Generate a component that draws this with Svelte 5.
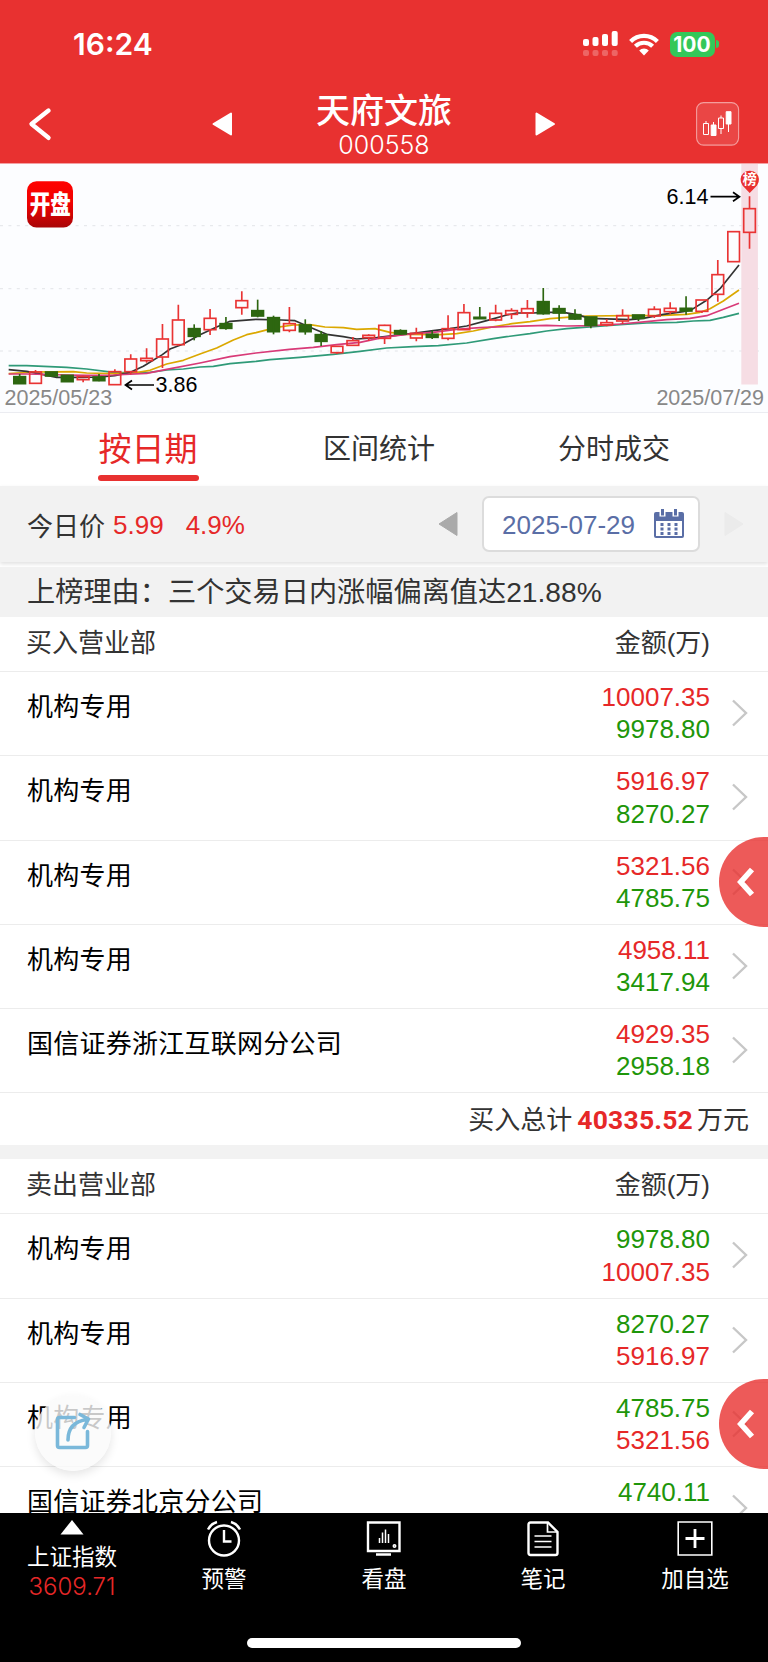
<script lang="ts">
  type Row = { name: string; first: string; second: string };

  const buyers: Row[] = [
    { name: "机构专用", first: "10007.35", second: "9978.80" },
    { name: "机构专用", first: "5916.97", second: "8270.27" },
    { name: "机构专用", first: "5321.56", second: "4785.75" },
    { name: "机构专用", first: "4958.11", second: "3417.94" },
    { name: "国信证券浙江互联网分公司", first: "4929.35", second: "2958.18" },
  ];

  const sellers: Row[] = [
    { name: "机构专用", first: "9978.80", second: "10007.35" },
    { name: "机构专用", first: "8270.27", second: "5916.97" },
    { name: "机构专用", first: "4785.75", second: "5321.56" },
    { name: "国信证券北京分公司", first: "4740.11", second: "" },
  ];

  const tabs = ["按日期", "区间统计", "分时成交"];
  let activeTab = $state(0);

  // [body top, body bottom, high, low, rising]
  const candles: [number, number, number, number, number][] = [
    [641, 662, 633, 662, 0],
    [627, 661, 621, 661, 1],
    [627, 639, 627, 639, 0],
    [637, 656, 637, 656, 0],
    [641, 650, 638, 658, 1],
    [642, 653, 633, 655, 0],
    [626, 665, 619, 665, 1],
    [588, 626, 574, 634, 1],
    [586, 593, 556, 599, 1],
    [528, 582, 483, 615, 1],
    [471, 545, 425, 548, 1],
    [497, 520, 484, 532, 0],
    [466, 500, 438, 516, 1],
    [482, 496, 462, 500, 0],
    [413, 434, 385, 455, 1],
    [443, 459, 410, 463, 0],
    [464, 506, 458, 514, 0],
    [482, 502, 432, 508, 1],
    [486, 506, 469, 515, 0],
    [515, 535, 504, 549, 0],
    [550, 569, 550, 573, 1],
    [533, 547, 522, 549, 1],
    [517, 524, 514, 534, 1],
    [487, 526, 485, 543, 1],
    [503, 513, 499, 516, 0],
    [511, 525, 494, 535, 1],
    [514, 523, 503, 528, 0],
    [497, 526, 457, 532, 1],
    [449, 500, 423, 500, 1],
    [463, 467, 432, 468, 0],
    [451, 471, 425, 475, 1],
    [443, 454, 436, 468, 1],
    [437, 450, 411, 464, 1],
    [416, 452, 375, 455, 0],
    [437, 450, 427, 474, 0],
    [455, 468, 439, 471, 0],
    [462, 487, 462, 496, 0],
    [479, 486, 468, 490, 1],
    [458, 474, 439, 483, 1],
    [456, 466, 456, 474, 0],
    [439, 459, 430, 465, 1],
    [436, 446, 418, 453, 1],
    [436, 444, 400, 455, 0],
    [411, 445, 411, 450, 1],
    [335, 394, 291, 416, 1],
    [206, 296, 206, 296, 1],
    [137, 208, 100, 257, 1],
  ];

  const averages = [
    {
      color: "#2f9a78",
      points:
        "26,608 80,608 200,613 260,618 340,628 400,629 450,628 500,621 550,618 600,612 640,610 690,602 768,595 810,590 900,583 1000,574 1080,565 1160,555 1240,551 1315,548 1400,540 1480,527 1520,521 1590,512 1640,504 1700,497 1780,491 1860,485 1940,480 2030,478 2080,474 2130,472 2170,463 2217,451",
    },
    {
      color: "#dba800",
      points:
        "26,632 100,627 220,626 260,630 340,632 400,630 450,622 500,603 550,592 600,573 650,555 700,531 740,515 768,509 830,493 880,486 930,485 975,492 1030,494 1070,499 1125,497 1170,508 1220,514 1320,515 1370,512 1420,504 1470,493 1536,482 1590,476 1650,467 1700,463 1760,459 1890,458 1990,457 2060,454 2100,448 2130,437 2170,414 2217,381",
    },
    {
      color: "#333",
      points:
        "26,620 80,625 130,635 170,643 250,643 300,642 344,638 391,628 430,610 487,575 510,558 550,543 600,515 650,492 690,475 768,469 845,471 885,473 930,493 980,514 1030,521 1070,528 1130,524 1180,518 1240,511 1300,503 1350,497 1400,489 1460,473 1520,456 1550,450 1600,450 1631,448 1690,448 1730,455 1770,466 1890,470 1930,466 1990,454 2050,446 2075,440 2120,412 2160,377 2217,306",
    },
    {
      color: "#d83a78",
      points:
        "26,633 80,633 200,636 260,637 340,636 440,631 500,619 600,600 690,581 768,570 868,559 940,553 1010,545 1080,538 1150,523 1230,513 1300,508 1380,498 1440,494 1536,490 1640,487 1700,489 1780,488 1860,483 1940,476 2000,470 2070,466 2120,458 2217,421",
    },
  ];

  const centerOf = (i: number) => 59 + i * 47.6;
</script>

{#snippet department(row: Row, selling: boolean)}
  <div class="row">
    <span class="name">{row.name}</span>
    <div class="amounts">
      <span class:up={!selling} class:down={selling}>{row.first}</span>
      <span class:up={selling} class:down={!selling}>{row.second}</span>
    </div>
    <svg class="more" viewBox="0 0 16 28"><path d="M1 1.5 14 14 1 26.5" /></svg>
  </div>
{/snippet}

{#snippet sideHandle()}
  <button class="side" aria-label="展开">
    <svg width="18" height="32" viewBox="0 0 18 32"><path d="M15 3.5 3.8 16 15 28.5" /></svg>
  </button>
{/snippet}

<div class="page">
  <header>
    <div class="status">
      <span class="time">16:24</span>
      <div class="status-icons">
        <svg width="36" height="26" viewBox="0 0 36 26" fill="#fff">
          <rect x="0" y="8" width="6" height="7" rx="2" />
          <rect x="9.5" y="6" width="6" height="9" rx="2" />
          <rect x="19" y="3" width="6" height="12" rx="2" />
          <rect x="28.7" y="0" width="6" height="15" rx="2" />
          <g opacity="0.25">
            <rect x="0" y="19" width="6" height="6" rx="2" />
            <rect x="9.5" y="19" width="6" height="6" rx="2" />
            <rect x="19" y="19" width="6" height="6" rx="2" />
            <rect x="28.7" y="19" width="6" height="6" rx="2" />
          </g>
        </svg>
        <svg class="wifi" width="30" height="23" viewBox="0 0 30 23">
          <path d="M1.6 8.4a19 19 0 0 1 26.8 0" />
          <path d="M6.4 13.3a12.2 12.2 0 0 1 17.2 0" />
          <path class="dot" d="M15 22.5 10.2 17.6a6.8 6.8 0 0 1 9.6 0z" />
        </svg>
        <span class="battery">100</span>
        <i class="nub"></i>
      </div>
    </div>
    <div class="nav">
      <svg width="26" height="36" viewBox="0 0 26 36">
        <path d="M20.5 4.5 3.5 18 20.5 31.8" fill="none" stroke="#fff" stroke-width="4.4" stroke-linecap="round" stroke-linejoin="round" />
      </svg>
      <svg width="22" height="26" viewBox="0 0 22 26">
        <path d="M1.5 13 19 2.5v21z" fill="#fff" stroke="#fff" stroke-width="2" stroke-linejoin="round" />
      </svg>
      <div class="title">
        <h1>天府文旅</h1>
        <span>000558</span>
      </div>
      <svg width="22" height="26" viewBox="0 0 22 26">
        <path d="M20 13 2.5 2.5v21z" fill="#fff" stroke="#fff" stroke-width="2" stroke-linejoin="round" />
      </svg>
      <span></span>
      <svg width="44" height="44" viewBox="0 0 44 44">
        <rect x="0.6" y="0.6" width="42" height="42.5" rx="7" fill="#fff" fill-opacity="0.1" stroke="#fff" stroke-opacity="0.5" stroke-width="1.1" />
        <g fill="none" stroke="#fff" stroke-width="1">
          <path d="M7.5 21.5h5v11h-5zM10 19v2.5M22.5 16h5v10.5h-5zM25 13.5V16M25 26.5V32M17.5 20v4M32.5 22v8" />
          <path d="M15.2 23h4.8v10.5h-4.8zM30.2 9.7h4.8v12.300h-4.8z" fill="#fff" />
        </g>
      </svg>
    </div>
  </header>

  <svg class="chart" viewBox="0 1 768 248">
    <defs>
      <linearGradient id="badge" x2="0" y2="1">
        <stop offset="0" stop-color="#ff0200" />
        <stop offset="0.5" stop-color="#ee0202" />
        <stop offset="1" stop-color="#a80507" />
      </linearGradient>
    </defs>
    <g stroke="#e2e4e8" stroke-width="1" stroke-dasharray="3 5.4">
      <path d="M0 62.7H764M0 125.7H764M0 188H764" />
    </g>
    <rect x="741.3" y="1" width="16.6" height="220.5" fill="#f6dde4" />
    <g transform="scale(0.33333)">
      {#each averages as line}
        <polyline points={line.points} stroke={line.color} stroke-width="5" fill="none" stroke-linejoin="round" />
      {/each}
      {#each candles as [top, bottom, high, low, rising], i}
        {@const cx = centerOf(i)}
        {#if rising}
          <g fill="none" stroke="#e93434" stroke-width="5">
            <rect x={cx - 17.5} y={top} width="35" height={bottom - top} />
            <path d="M{cx} {high}V{top}M{cx} {bottom}V{low}" />
          </g>
        {:else}
          <g fill="#2d6610" stroke="#2d6610" stroke-width="5">
            <rect x={cx - 17.5} y={top} width="35" height={bottom - top} />
            <path d="M{cx} {high}V{low}" />
          </g>
        {/if}
      {/each}
    </g>
    <rect x="27" y="18.3" width="46" height="46.3" rx="9.5" fill="url(#badge)" />
    <text transform="translate(50.3 51) scale(1 1.25)" class="badge-text" text-anchor="middle">开盘</text>
    <g fill="none" stroke="#000" stroke-width="1.7">
      <path d="M154 222H126M132 217.5 125.5 222 132 226.5" />
      <path d="M710.5 33.7H738.5M733 29.2 739.5 33.7 733 38.2" />
    </g>
    <text x="155.5" y="229" class="price">3.86</text>
    <text x="666.5" y="41" class="price">6.14</text>
    <path d="M742.5 22.5A9.2 9.2 0 1 1 757 22.5L749.7 30z" fill="#e93030" />
    <text x="749.7" y="21.3" class="pin" text-anchor="middle">榜</text>
    <text x="4.5" y="242" class="date">2025/05/23</text>
    <text x="764" y="242" class="date" text-anchor="end">2025/07/29</text>
  </svg>

  <div class="tabs">
    {#each tabs as tab, i}
      <button class:active={activeTab === i} onclick={() => (activeTab = i)}>
        <span>{tab}</span>
        <i></i>
      </button>
    {/each}
  </div>

  <div class="day-bar">
    <span>今日价</span>
    <span class="up quote">5.99</span>
    <span class="up figure">4.9%</span>
    <svg class="prev" width="20" height="26" viewBox="0 0 20 26"><path d="M1 13 19 1.5V24.5z" fill="#aaa" stroke="#aaa" stroke-linejoin="round" /></svg>
    <div class="picker">
      <span class="figure">2025-07-29</span>
      <svg width="32" height="30" viewBox="0 0 32 30">
        <path d="M3 3H29Q31 3 31 5V27Q31 29 29 29H3Q1 29 1 27V5Q1 3 3 3z" fill="#5a6ea6" />
        <path d="M3 12H29V27H3z" fill="#fff" />
        <path d="M9.5 0V7.5M22.5 0V7.5" stroke="#fff" stroke-width="6" />
        <path d="M9.5 0V6.5M22.5 0V6.5" stroke="#5a6ea6" stroke-width="3" />
        <path d="M7.5 15.5h17M7.5 20h17M7.5 24.5h17" stroke="#5a6ea6" stroke-width="3" stroke-dasharray="3 4" />
      </svg>
    </div>
    <svg class="next" width="20" height="26" viewBox="0 0 20 26"><path d="M19 13 1 1.5V24.5z" fill="#ebebeb" stroke="#ebebeb" stroke-linejoin="round" /></svg>
  </div>

  <div class="reason">上榜理由：三个交易日内涨幅偏离值达21.88%</div>

  <section>
    <div class="head"><span>买入营业部</span><span>金额(万)</span></div>
    {#each buyers as row}
      {@render department(row, false)}
    {/each}
    <div class="total">买入总计<b>40335.52</b>万元</div>
    {@render sideHandle()}
  </section>

  <section class="sell">
    <div class="head"><span>卖出营业部</span><span>金额(万)</span></div>
    {#each sellers as row}
      {@render department(row, true)}
    {/each}
    {@render sideHandle()}
  </section>

  <button class="share" aria-label="分享">
    <svg width="38" height="40" viewBox="0 0 38 40">
      <path d="M20.5 5.5H5.5Q3.5 5.5 3.5 7.5V33.5Q3.5 35.5 5.5 35.5H31.5Q33.5 35.5 33.5 33.5V19.5" />
      <path d="M14 28Q14 10 33 7.5M26 2.5 34.5 7 30 15.5" />
    </svg>
  </button>

  <footer>
    <div class="item index">
      <svg width="24" height="15" viewBox="0 0 24 15"><path d="M12 0 23.5 14.5H.5z" fill="#fff" /></svg>
      <span>上证指数</span>
      <em>3609.71</em>
    </div>
    <div class="item">
      <svg width="36" height="37" viewBox="0 0 36 37">
        <circle cx="18" cy="20.5" r="15" />
        <path d="M18 10V21.5H25.5M2 9.5Q4.5 4 11 2M34 9.5Q31.5 4 25 2" />
      </svg>
      <span>预警</span>
    </div>
    <div class="item">
      <svg width="36" height="37" viewBox="0 0 36 37">
        <path d="M2 2.5H33.5V31H2zM10 34.5H25" />
        <path d="M13.5 18V23M16.5 12.5V23M19.5 9.5V23M22.5 14V23" stroke-width="1.5" />
        <circle cx="28.5" cy="26" r="0.8" />
      </svg>
      <span>看盘</span>
    </div>
    <div class="item">
      <svg width="36" height="37" viewBox="0 0 36 37">
        <path d="M5.5 2.5H23L32.5 12V33Q32.5 35 30.5 35H5.5Q3.5 35 3.5 33V4.5Q3.5 2.5 5.5 2.5z" />
        <path d="M22.5 3V12H32M9.5 16H26.5M9.5 21.5H26.5M9.5 27H26.5" stroke-width="1.7" />
      </svg>
      <span>笔记</span>
    </div>
    <div class="item">
      <svg width="36" height="37" viewBox="0 0 36 37">
        <path d="M1.2 2H34.8V35H1.2z" stroke-width="1.6" />
        <path d="M8.5 18.5H27.5M18 9V28" stroke-width="2.8" />
      </svg>
      <span>加自选</span>
    </div>
    <div class="home"></div>
  </footer>
</div>

<style>
  :global(body) {
    margin: 0;
    background: #fff;
  }

  .page {
    position: relative;
    width: 768px;
    height: 1662px;
    overflow: hidden;
    background: #fff;
    color: #333;
    font-family: "Liberation Sans", "Noto Sans CJK SC", sans-serif;
    font-size: 26px;
    font-weight: 400;
  }

  button {
    padding: 0;
    border: none;
    background: none;
    color: inherit;
    font: inherit;
  }

  svg {
    display: block;
  }

  header {
    box-sizing: border-box;
    height: 164px;
    background: #e83130;
    border-bottom: 1px solid #f4a0a3;
    color: #fff;
  }

  .status {
    display: flex;
    align-items: center;
    justify-content: space-between;
    height: 88px;
    padding: 0 49px 0 73px;
    font-family: Inter, sans-serif;
  }

  .time {
    font-size: 30px;
    font-weight: 600;
  }

  .status-icons {
    display: flex;
    align-items: center;
  }

  .wifi {
    margin: 0 11px 0 10px;
    fill: none;
    stroke: #fff;
    stroke-width: 4.2;
  }

  .wifi .dot {
    fill: #fff;
    stroke: none;
  }

  .battery {
    width: 45px;
    height: 25px;
    border-radius: 7px;
    background: #34c759;
    font-size: 21px;
    font-weight: 700;
    line-height: 25px;
    text-align: center;
  }

  .nub {
    width: 3px;
    height: 8px;
    margin-left: 1.5px;
    border-radius: 0 4px 4px 0;
    background: #34c759;
  }

  .nav {
    display: grid;
    grid-template-columns: 184px 22px 1fr 22px 140px 44px;
    align-items: center;
    height: 72px;
    padding: 0 28px;
  }

  .title {
    padding-top: 4px;
    text-align: center;
  }

  h1 {
    margin: 0;
    font-size: 34px;
    font-weight: 500;
    line-height: 38px;
  }

  .title span {
    display: block;
    font-family: Inter, sans-serif;
    font-size: 25px;
    font-weight: 300;
    line-height: 30px;
  }

  .chart {
    width: 768px;
    height: 248px;
    background: #fcfdff;
    border-bottom: 1px solid #ebecf1;
  }

  .price {
    font-size: 21.5px;
  }

  .date {
    fill: #888;
    font-size: 21.5px;
  }

  .badge-text {
    fill: #fff;
    font-size: 20.5px;
    font-weight: 900;
  }

  .pin {
    fill: #fff;
    font-size: 14px;
    font-weight: 700;
  }

  .tabs {
    display: grid;
    grid-template-columns: 232px 230px 240px;
    justify-items: center;
    height: 73px;
    padding-left: 32px;
    font-size: 28px;
  }

  .tabs button {
    display: flex;
    flex-direction: column;
    height: 68px;
  }

  .tabs span {
    height: 62px;
    line-height: 73px;
  }

  .tabs i {
    flex: none;
    align-self: stretch;
    height: 5.5px;
    margin: 0 -1px;
    border-radius: 3px;
  }

  .tabs .active {
    color: #e62828;
    font-size: 33px;
  }

  .tabs .active i {
    background: #e83130;
  }

  .day-bar {
    display: flex;
    align-items: center;
    height: 76px;
    padding-left: 27px;
    background: #f2f2f2;
    box-shadow: 0 2px 4px rgba(0, 0, 0, 0.12);
  }

  .up {
    color: #e62828;
  }

  .down {
    color: #1e960a;
  }

  .day-bar .figure,
  .quote {
    padding-top: 3px;
  }

  .quote {
    margin: 0 22px 0 8px;
  }

  .prev {
    margin: 0 24px 0 auto;
  }

  .next {
    margin: 0 24px;
  }

  .picker {
    display: flex;
    align-items: center;
    box-sizing: border-box;
    width: 218px;
    height: 56px;
    padding: 0 13px 0 18px;
    justify-content: space-between;
    background: #fff;
    border: 2px solid #dcdcdc;
    border-radius: 7px;
    color: #5a6ea6;
  }

  .reason {
    height: 50px;
    margin-top: 5px;
    padding-left: 27px;
    background: #f2f2f2;
    font-size: 28.2px;
    line-height: 50px;
  }

  section {
    position: relative;
  }

  .head {
    display: flex;
    justify-content: space-between;
    height: 54px;
    padding: 0 58px 0 26px;
    line-height: 53px;
  }

  .row {
    display: flex;
    box-sizing: border-box;
    height: 84.3px;
    padding: 9px 20px 0 27px;
    border-top: 1px solid #ececec;
  }

  .name {
    flex: 1;
    color: #000;
    letter-spacing: 0.25px;
    line-height: 52px;
  }

  .amounts {
    display: flex;
    flex-direction: column;
    line-height: 32.3px;
    text-align: right;
  }

  .more {
    width: 16px;
    height: 28px;
    margin: 18px 0 0 22px;
    fill: none;
    stroke: #c7c7c7;
    stroke-width: 2.4;
  }

  .total {
    box-sizing: border-box;
    height: 53px;
    padding-right: 19px;
    border-top: 1px solid #ececec;
    line-height: 54px;
    text-align: right;
  }

  .total b {
    margin: 0 4px 0 5px;
    color: #e62828;
    font-family: Roboto, sans-serif;
    font-size: 26.5px;
    font-weight: 700;
    letter-spacing: 0.2px;
  }

  .sell {
    border-top: 14px solid #f2f2f2;
  }

  .side {
    position: absolute;
    top: 220px;
    right: 0;
    width: 49px;
    height: 90px;
    padding-left: 17.5px;
    border-radius: 45px 0 0 45px;
    background: rgba(232, 49, 48, 0.8);
  }

  .side path {
    fill: none;
    stroke: #fff;
    stroke-width: 5.6;
  }

  .share {
    position: absolute;
    left: 35px;
    top: 1395px;
    display: flex;
    align-items: center;
    justify-content: center;
    width: 76px;
    height: 76px;
    border-radius: 50%;
    background: rgba(250, 250, 250, 0.8);
    box-shadow: 0 4px 10px rgba(0, 0, 0, 0.1);
  }

  .share svg {
    margin-top: -2px;
    fill: none;
    stroke: #7ab8da;
    stroke-width: 3.6;
    stroke-linecap: round;
    stroke-linejoin: round;
  }

  footer {
    position: absolute;
    left: 0;
    bottom: 0;
    display: grid;
    grid-template-columns: 144px 160px 160px 158px 146px;
    width: 768px;
    height: 149.5px;
    background: #000;
    color: #fff;
    font-size: 22.5px;
  }

  .item {
    display: flex;
    flex-direction: column;
    align-items: center;
    padding-top: 7px;
    line-height: 46px;
  }

  .item svg {
    fill: none;
    stroke: #fff;
    stroke-width: 2.4;
  }

  .index svg {
    stroke: none;
  }

  .index span {
    line-height: 45px;
  }

  .index em {
    color: #e62828;
    font-family: Inter, sans-serif;
    font-size: 24px;
    font-style: normal;
    font-weight: 300;
    line-height: 13px;
  }

  .home {
    position: absolute;
    left: 247px;
    bottom: 14.5px;
    width: 274px;
    height: 9.5px;
    border-radius: 5px;
    background: #fff;
  }
</style>
